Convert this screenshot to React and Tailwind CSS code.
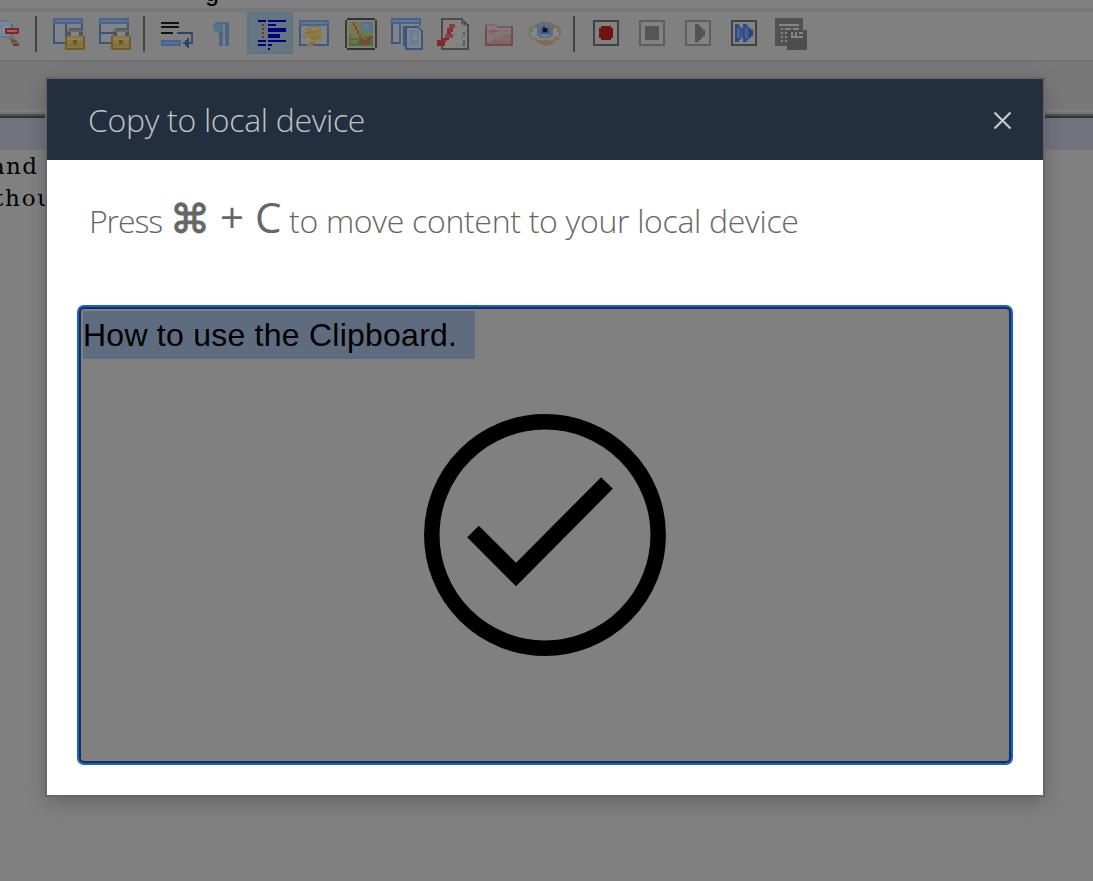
import React from "react";

// Toolbar icons are 16x16 pixel drawings shown at double size: [x, y, width, height, colour]
const windowFrame = [
  [0, 0, 15, 13, "#3e5578"],
  [0, 0, 15, 3, "#4c6486"],
  [1, 1, 13, 1, "#5d7595"],
  [1, 3, 13, 9, "#80848a"],
];
const padlock = [
  [8, 5, 6, 1, "#5c5c5c"],
  [7, 6, 8, 1, "#6a6a6a"],
  [7, 7, 2, 3, "#555555"],
  [13, 7, 2, 3, "#555555"],
  [9, 7, 4, 2, "#858585"],
  [6, 9, 10, 7, "#705b30"],
  [7, 9, 8, 6, "#8a7642"],
  [7, 10, 8, 1, "#93804e"],
  [7, 13, 8, 1, "#806d38"],
  [10, 11, 2, 2, "#67552a"],
];
const icons = {
  zoomOut: [
    [5, 1, 6, 1, "#64788b"], [4, 2, 8, 7, "#738799"], [5, 9, 6, 1, "#64788b"],
    [12, 3, 1, 6, "#55697e"], [8, 4, 3, 4, "#7d8f9e"], [11, 9, 2, 2, "#66717a"],
    [9, 5, 7, 3, "#852427"], [10, 6, 5, 1, "#946466"],
    [11, 10, 3, 1, "#79684f"], [12, 11, 3, 1, "#665139"], [12, 12, 4, 1, "#76614a"], [13, 13, 3, 1, "#59452e"],
  ],
  lockV: [...windowFrame, [6, 3, 1, 10, "#3e5578"], ...padlock],
  lockH: [...windowFrame, [1, 7, 13, 1, "#3e5578"], ...padlock],
  wrap: [
    [0, 2, 9, 1, "#111"], [0, 4, 9, 1, "#111"], [0, 7, 6, 1, "#111"],
    [8, 7, 8, 1, "#2f4366"], [15, 8, 1, 5, "#3a5078"], [11, 12, 4, 1, "#2f4366"],
    [12, 11, 2, 3, "#2f4366"], [13, 10, 1, 5, "#2f4366"],
    [0, 11, 10, 3, "#486392"], [1, 12, 8, 1, "#586f9a"],
  ],
  pilcrow: [
    [4, 2, 7, 1, "#4b6c8a"], [3, 3, 5, 3, "#52728e"], [4, 6, 4, 1, "#52728e"],
    [6, 7, 2, 7, "#4d658a"], [9, 3, 2, 11, "#4d658a"], [8, 3, 1, 1, "#6d7f90"], [5, 7, 1, 1, "#647b92"],
  ],
  outline: [
    [2, 1, 4, 1, "#00007f"], [7, 1, 9, 1, "#00007f"], [7, 3, 4, 1, "#00007f"],
    [7, 5, 9, 2, "#00007f"], [7, 8, 6, 2, "#00007f"], [2, 11, 4, 1, "#00007f"],
    [7, 11, 9, 1, "#00007f"], [2, 13, 4, 1, "#00007f"], [7, 13, 2, 1, "#00007f"], [7, 15, 1, 1, "#00007f"],
    [4, 3, 1, 1, "#8f2a24"], [4, 5, 1, 1, "#8f2a24"], [4, 7, 1, 1, "#8f2a24"], [4, 9, 1, 1, "#8f2a24"],
  ],
  bolt: [
    [0, 1, 15, 13, "#40587d"], [0, 1, 15, 3, "#4b6488"], [1, 2, 13, 1, "#5f7596"], [1, 4, 13, 9, "#818282"],
    [5, 4, 6, 1, "#8a7a55"], [4, 5, 7, 2, "#8b7649"], [6, 5, 4, 1, "#96855a"],
    [3, 7, 5, 1, "#86703f"], [8, 7, 4, 1, "#8f7a4b"], [2, 8, 10, 1, "#8f7a49"], [2, 9, 2, 1, "#837553"],
    [5, 9, 6, 1, "#8d7338"], [6, 10, 4, 1, "#8d7338"], [5, 11, 4, 1, "#93804f"], [5, 12, 3, 1, "#837047"],
    [4, 13, 3, 1, "#857655"], [4, 14, 2, 1, "#857b60"], [4, 15, 1, 1, "#858068"],
  ],
  map: [
    [0, 1, 16, 14, "#3b3b31"], [1, 0, 14, 16, "#34303a"], [1, 1, 14, 14, "#7f7f7a"],
    [2, 2, 12, 12, "#777a4e"], [8, 2, 6, 5, "#5a7189"], [9, 3, 3, 3, "#66798a"], [8, 7, 6, 2, "#6b7849"],
    [2, 10, 12, 4, "#51693f"], [3, 11, 3, 2, "#677845"], [9, 9, 5, 2, "#5f6f42"],
    [4, 2, 1, 2, "#844641"], [5, 4, 1, 2, "#86433d"], [6, 6, 1, 2, "#83423c"], [7, 8, 1, 2, "#884436"],
    [8, 10, 1, 2, "#82402e"], [9, 11, 3, 2, "#7e462e"], [7, 12, 2, 1, "#744a31"], [12, 9, 2, 1, "#7c462e"],
    [11, 10, 2, 1, "#7c462e"], [12, 13, 1, 1, "#766239"], [2, 8, 1, 2, "#5a6e42"], [6, 10, 1, 2, "#5b744a"],
  ],
  pages: [
    [0, 0, 15, 3, "#49618a"], [1, 1, 13, 1, "#627999"], [0, 3, 4, 10, "#3d557c"], [1, 3, 3, 9, "#818486"],
    [4, 2, 11, 11, "#486388"], [5, 3, 9, 9, "#7e8488"],
    [6, 4, 8, 10, "#3f5b83"], [5, 4, 1, 9, "#7e8488"],
    [7, 4, 9, 12, "#3a557f"], [8, 5, 7, 10, "#7f868d"],
    [9, 6, 5, 8, "#6f7d91"], [11, 8, 2, 3, "#7a8796"], [14, 4, 2, 1, "#808080"], [15, 5, 1, 1, "#808080"],
    [14, 5, 1, 1, "#3a557f"],
  ],
  pdf: [
    [3, 1, 12, 14, "#838383"],
    [2, 0, 11, 1, "#4b4b4b"], [2, 1, 1, 10, "#4b4b4b"], [2, 15, 14, 1, "#4b4b4b"], [15, 3, 1, 12, "#4b4b4b"],
    [2, 13, 1, 2, "#4b4b4b"], [12, 1, 1, 2, "#5b5b5b"], [13, 1, 1, 2, "#555"], [14, 2, 1, 2, "#4b4b4b"],
    [13, 3, 2, 1, "#5f5f5f"], [6, 3, 3, 2, "#824346"], [5, 5, 3, 2, "#893134"], [5, 7, 2, 2, "#862c2f"],
    [4, 8, 4, 2, "#8a4043"], [2, 10, 4, 1, "#85292c"], [0, 11, 4, 3, "#84282b"], [4, 11, 1, 1, "#864e50"],
    [9, 8, 1, 1, "#6b7c72"], [13, 7, 1, 2, "#606060"], [13, 11, 1, 3, "#5b5b5b"],
    [12, 9, 1, 1, "#747474"], [12, 13, 1, 1, "#747474"], [9, 13, 1, 1, "#6b7c72"],
  ],
  folder: [
    [1, 3, 6, 1, "#85666a"], [1, 4, 1, 10, "#78484c"], [14, 4, 1, 10, "#78484c"], [7, 4, 7, 1, "#805a5d"],
    [1, 13, 14, 1, "#78484c"], [2, 4, 5, 1, "#837b7c"], [2, 5, 12, 8, "#837a7b"],
    [3, 6, 4, 1, "#805a5d"], [3, 7, 3, 1, "#84696b"], [7, 6, 6, 1, "#846e70"],
    [3, 8, 11, 2, "#837476"], [5, 10, 9, 1, "#826c6e"], [4, 11, 10, 1, "#826567"], [2, 12, 12, 1, "#826063"],
    [10, 8, 4, 3, "#826b6d"],
  ],
  eye: [
    [5, 2, 6, 1, "#6c6e6c"], [3, 3, 10, 1, "#687069"], [1, 4, 3, 1, "#6f7660"], [12, 4, 3, 1, "#7a6c4c"],
    [0, 5, 2, 2, "#6f7868"], [14, 5, 2, 2, "#7d7152"], [0, 7, 1, 2, "#687a6c"], [15, 7, 1, 2, "#7d6a58"],
    [0, 9, 2, 1, "#7a7a66"], [13, 9, 2, 1, "#85705a"], [1, 10, 3, 1, "#71796a"], [12, 10, 3, 1, "#80704f"],
    [3, 11, 10, 1, "#7e7250"], [5, 12, 7, 1, "#7d6658"], [7, 13, 4, 1, "#827064"],
    [2, 5, 12, 4, "#868686"], [1, 7, 14, 2, "#868686"], [2, 9, 11, 1, "#868686"], [4, 10, 8, 1, "#84827f"],
    [4, 3, 8, 1, "#686f75"], [4, 4, 8, 1, "#627081"], [4, 5, 8, 4, "#566b87"], [5, 9, 6, 1, "#5d7189"],
    [6, 5, 4, 3, "#3d5474"], [7, 5, 2, 2, "#0d1520"], [7, 4, 1, 1, "#2c3b4d"], [6, 8, 4, 1, "#68809b"],
  ],
};
const box = (c) => [[1, 1, 13, 13, c], [2, 2, 11, 11, "#828282"]];
icons.record = [...box("#424242"), [5, 4, 5, 7, "#70130e"], [4, 5, 7, 5, "#70130e"]];
icons.stop = [...box("#5e5e5e"), [4, 4, 7, 7, "#565656"]];
icons.play = [...box("#5e5e5e"), [6, 3, 2, 9, "#535353"], [8, 4, 1, 7, "#535353"], [9, 5, 1, 5, "#535353"], [10, 6, 1, 3, "#535353"]];
icons.forward = [
  ...box("#424242"), [3, 3, 2, 9, "#2f4a80"], [5, 4, 1, 7, "#3c5689"], [6, 5, 1, 5, "#3c5689"],
  [7, 3, 2, 9, "#2f4a80"], [9, 4, 1, 7, "#3c5689"], [10, 5, 1, 5, "#2a4376"], [11, 6, 1, 3, "#2a4376"],
  [4, 5, 1, 5, "#4b6594"], [8, 5, 1, 5, "#4b6594"],
];
icons.macro = [
  [0, 0, 14, 14, "#525252"], [6, 6, 10, 10, "#4d4d4d"], [2, 3, 10, 1, "#858585"],
  [3, 5, 1, 1, "#858585"], [5, 5, 3, 1, "#858585"], [9, 5, 3, 1, "#858585"],
  [3, 7, 1, 1, "#858585"], [5, 7, 1, 1, "#858585"], [3, 9, 1, 1, "#858585"], [5, 9, 1, 1, "#858585"],
  [3, 11, 1, 1, "#858585"], [5, 11, 1, 1, "#858585"], [8, 7, 1, 3, "#858585"], [8, 9, 6, 1, "#858585"],
  [10, 7, 1, 2, "#858585"], [12, 7, 2, 1, "#858585"],
];

function PixelIcon({ name, active }) {
  return (
    <div className={active
      ? "flex h-[42px] w-[46px] shrink-0 items-center justify-center border-2 border-[#5b748a] bg-[#667680]"
      : "flex h-[42px] w-[46px] shrink-0 items-center justify-center"}>
      <svg viewBox="0 0 16 16" className="size-8 shrink-0 translate-y-px" shapeRendering="crispEdges">
        {icons[name].map(([x, y, w, h, fill], i) => (
          <rect key={i} x={x} y={y} width={w} height={h} fill={fill} />
        ))}
      </svg>
    </div>
  );
}

function Editor() {
  return (
    <div className="h-full w-full overflow-hidden bg-[#808080]">
      <div className="h-2 overflow-hidden pl-[204px] font-['Liberation_Mono'] text-[26px] leading-[26px] text-black">
        <div className="-mt-[19px]">g</div>
      </div>
      <div className="h-1 bg-[#787878]" />
      <div className="flex h-12 items-start">
        <div className="-ml-5 flex">
          <PixelIcon name="zoomOut" />
        </div>
        <div className="mx-[9px] mt-1 h-9 w-0.5 shrink-0 bg-[#444]" />
        <PixelIcon name="lockV" />
        <PixelIcon name="lockH" />
        <div className="mt-1 mr-[9px] ml-[5px] h-9 w-0.5 shrink-0 bg-[#444]" />
        <PixelIcon name="wrap" />
        <PixelIcon name="pilcrow" />
        <div className="ml-px flex">
          <PixelIcon name="outline" active />
        </div>
        <div className="-ml-px flex">
          <PixelIcon name="bolt" />
          <PixelIcon name="map" />
          <PixelIcon name="pages" />
          <PixelIcon name="pdf" />
          <PixelIcon name="folder" />
          <PixelIcon name="eye" />
        </div>
        <div className="mt-1 mr-[9px] ml-[5px] h-9 w-0.5 shrink-0 bg-[#444]" />
        <PixelIcon name="record" />
        <PixelIcon name="stop" />
        <PixelIcon name="play" />
        <PixelIcon name="forward" />
        <PixelIcon name="macro" />
      </div>
      <div className="h-0.5 bg-[#6f6f6f]" />
      <div className="h-12 bg-[#787878]" />
      <div className="h-0.5 bg-[#808080]" />
      <div className="h-0.5 bg-[#747474]" />
      <div className="h-0.5 bg-[#505050]" />
      <div className="h-0.5 bg-[#353535]" />
      <div className="h-8 bg-[#737380]" />
      <div className="font-['DejaVu_Serif'] text-[23px] leading-8 tracking-[1.4px] text-black">
        <div className="-ml-[9px]">and</div>
        <div className="-ml-[6px] tracking-[1.8px]">thout</div>
      </div>
    </div>
  );
}

export default function App() {
  return (
    <div className="relative h-[881px] w-[1093px] overflow-hidden font-['Open_Sans',sans-serif]">
      <Editor />
      <div className="absolute top-[79px] left-[47px] flex h-[716px] w-[996px] flex-col bg-white shadow-[0_0_0_2px_#666,0_6px_20px_rgba(0,0,0,0.25)]">
        <header className="flex h-[81px] shrink-0 items-center justify-between bg-[#232f3e] pr-[31px] pl-[41px]">
          <h1 className="text-[32px] leading-[40px] font-light tracking-[-0.32px] whitespace-nowrap text-[#c2c4c6]">Copy to local device</h1>
          <button aria-label="Close" className="mt-px flex size-[19px] items-center justify-center">
            <svg viewBox="0 0 19 19" className="size-[19px]" fill="none" stroke="#c6c8ca" strokeWidth="2.2">
              <path d="M1.500 1.500 17.500 17.500M17.500 1.500 1.500 17.500" />
            </svg>
          </button>
        </header>
        <p className="mt-[29px] flex h-[56px] shrink-0 items-baseline pl-[42px] text-[32px] leading-[56px] font-light whitespace-nowrap text-[#666]">
          <span className="w-[81px] tracking-[-1.1px]">Press</span>
          <span className="w-[50px] font-['DejaVu_Sans'] text-[40px] font-normal [-webkit-text-stroke:1px_#666]">⌘</span>
          <span className="w-[35px] text-[42px] font-normal">+</span>
          <span className="w-[34px] text-[42px] font-normal">C</span>
          <span className="tracking-[-0.3px]">to move content to your local device</span>
        </p>
        <div className="mt-[60px] ml-[30px] flex h-[460px] w-[936px] flex-col rounded-[7px] border-2 border-[#1d5fc9] bg-[#808080]">
          <div className="flex h-full flex-col rounded-[5px] border-2 border-[#14305e] pt-0.5 pl-0.5">
            <div className="h-[48px] w-[392px] shrink-0 bg-[#5f6c7f] font-['Liberation_Sans'] text-[32px] leading-[48px] tracking-[0.24px] whitespace-nowrap text-black">
              How to use the Clipboard.
            </div>
            <svg viewBox="0 0 242 242" className="mt-[55px] ml-[341px] size-[242px] shrink-0" fill="none" stroke="#000">
              <circle cx="121" cy="121" r="113.2" strokeWidth="15.5" />
              <path d="M49 117.500 92 160.500 183 69" strokeWidth="16.500" />
            </svg>
          </div>
        </div>
      </div>
    </div>
  );
}
